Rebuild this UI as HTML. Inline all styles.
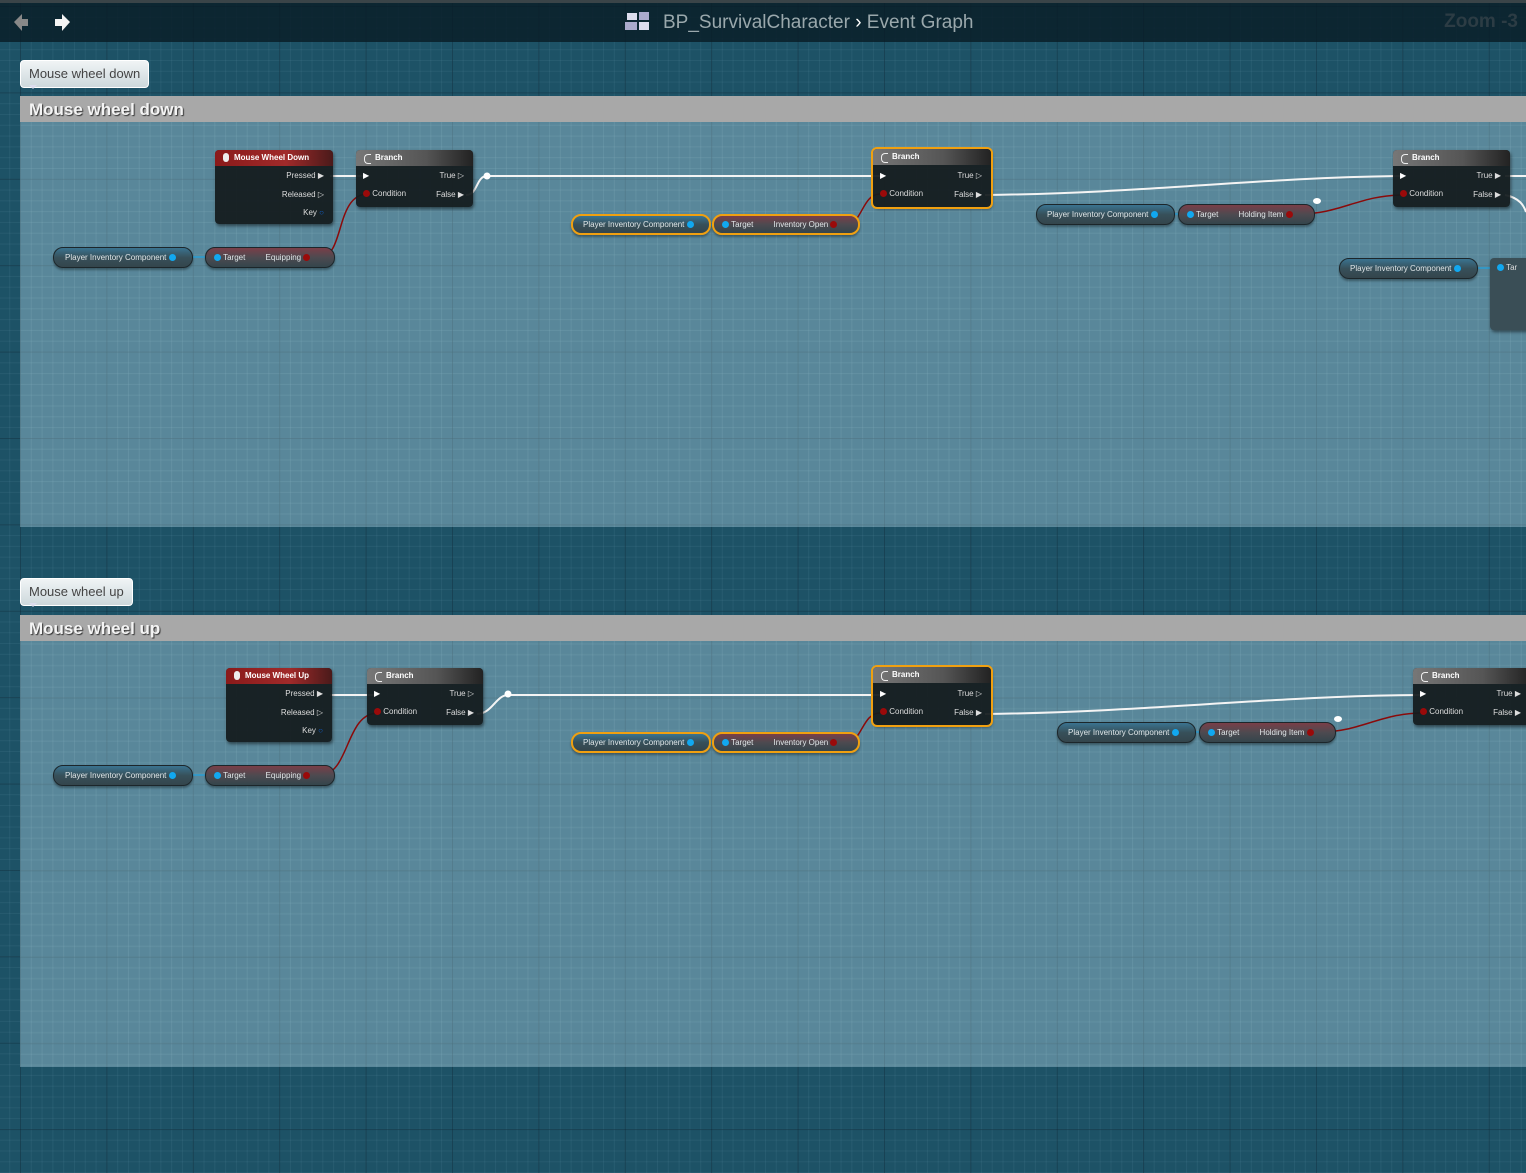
<!DOCTYPE html>
<html><head><meta charset="utf-8"><style>
*{box-sizing:border-box;margin:0;padding:0}
body{width:1526px;height:1173px;overflow:hidden;position:relative;font-family:"Liberation Sans",sans-serif;
background-color:#1d5266;
background-image:linear-gradient(90deg,rgba(10,40,55,.5) 1px,transparent 1px),linear-gradient(0deg,rgba(10,40,55,.5) 1px,transparent 1px),linear-gradient(90deg,rgba(90,140,160,.16) 1px,transparent 1px),linear-gradient(0deg,rgba(90,140,160,.16) 1px,transparent 1px);
background-size:86.4px 86.4px,86.4px 86.4px,10.8px 10.8px,10.8px 10.8px;
background-position:20px 7px,20px 7px,20px 7px,20px 7px}
.top{position:absolute;left:0;top:0;width:1526px;height:42px;background:rgba(8,28,38,.82);border-top:3px solid #3a4448}
.title{position:absolute;left:663px;top:9px;font-size:19px;color:#9aa8ac}
.zoom{position:absolute;right:8px;top:8px;font-size:19px;font-weight:bold;color:#2c3c44}
.cmt{position:absolute;left:20px;width:1506px;background-color:rgba(130,172,188,.6);
background-image:linear-gradient(90deg,rgba(60,100,115,.3) 1px,transparent 1px),linear-gradient(0deg,rgba(60,100,115,.3) 1px,transparent 1px),linear-gradient(90deg,rgba(150,190,205,.1) 1px,transparent 1px),linear-gradient(0deg,rgba(150,190,205,.1) 1px,transparent 1px);
background-size:86.4px 86.4px,86.4px 86.4px,10.8px 10.8px,10.8px 10.8px;background-position:0 -89px}
.cmt .hd{height:26px;background:#a8a8a8;color:#f4f4f4;font-size:17px;font-weight:bold;padding:4px 0 0 9px;text-shadow:1px 1px 1px #333}
.bub{position:absolute;left:20px;height:28px;background:linear-gradient(#f0f4f5,#cdd8dc);border-radius:4px;border:1px solid #fff;color:#444;font-size:13px;padding:5px 8px 0 8px}
.bub:after{content:"";position:absolute;left:8px;bottom:-6px;border:4px solid transparent;border-top:4px solid #dde;}
.node{position:absolute;background:rgba(20,28,30,.94);border-radius:4px;box-shadow:1px 2px 3px rgba(0,0,0,.5);color:#ddd;font-size:8px}
.node .h{height:16px;border-radius:4px 4px 0 0;font-weight:bold;color:#fff;padding:3px 0 0 19px;font-size:8px;position:relative}
.ev .h{background:linear-gradient(90deg,#8a1a1a,#a02a2a 60%,#4a1a1a)}
.br .h{background:linear-gradient(90deg,#777,#555 60%,#222)}
.br .h:before{content:"";position:absolute;left:8px;top:4px;width:6px;height:8px;border:1.5px solid #eee;border-right:none;border-radius:4px 0 0 4px}
.ev .h:before{content:"";position:absolute;left:8px;top:3px;width:6px;height:9px;background:#eee;border-radius:3px}
.sel{outline:2px solid #f0a010;outline-offset:0}
.r{position:absolute;right:9px;text-align:right}
.l{position:absolute}
.pill{position:absolute;height:21px;border-radius:10px;background:linear-gradient(#3e5862,#34454c);border:1px solid #1c262a;box-shadow:0 2px 2px rgba(0,0,0,.35);color:#e0e6e8;font-size:8px;line-height:19px}
.pb{background:linear-gradient(#3a7390,#37505a 50%,#34454c)}
.pr{background:linear-gradient(#7a3e48,#4d4a50 50%,#34454c)}
.ps{border:2px solid #f0a010;line-height:17px}
.dot{display:inline-block;width:7px;height:7px;border-radius:50%;vertical-align:middle}
.b{background:#11a8f0}.rd{background:#9a0a0a}
svg{position:absolute;left:0;top:0}
</style></head><body>
<div class="top">
<svg width="90" height="40" style="top:2px"><path d="M14 17 L22 9 L22 14 L28 14 L28 21 L22 21 L22 26 Z" fill="#888"/><path d="M70 17 L62 9 L62 14 L55 14 L55 21 L62 21 L62 26 Z" fill="#f4f4f4"/></svg>
<svg width="30" height="30" style="left:624px;top:6px"><rect x="3" y="4" width="10" height="7" fill="#dde"/><rect x="15" y="3" width="10" height="8" fill="#aac"/><rect x="1" y="13" width="12" height="8" fill="#aac"/><rect x="15" y="13" width="10" height="8" fill="#dde"/></svg>
<div class="title">BP_SurvivalCharacter <span style="color:#fff">›</span> Event Graph</div>
<div class="zoom">Zoom -3</div>
</div>

<div class="cmt" style="top:96px;height:431px"><div class="hd">Mouse wheel down</div></div>
<div class="bub" style="top:60px">Mouse wheel down</div>
<div class="cmt" style="top:615px;height:452px"><div class="hd">Mouse wheel up</div></div>
<div class="bub" style="top:578px">Mouse wheel up</div>

<svg width="1526" height="1173" fill="none">
<g stroke="#f4f4f4" stroke-width="2">
<path d="M330 176 H364"/><path d="M466 195 C478 195,476 176,487 176 H880"/><path d="M985 195 C1150 193,1250 178,1400 176"/><path d="M1505 176 H1526"/><path d="M1505 195 C1520 198,1524 206,1526 212"/>
<path d="M330 695 H375"/><path d="M477 714 C492 714,496 695,508 695 H880"/><path d="M985 714 C1150 712,1270 696,1420 695"/>
</g>
<circle cx="487" cy="176" r="3.5" fill="#fff"/><circle cx="508" cy="694" r="3.5" fill="#fff"/>
<ellipse cx="1317" cy="201" rx="4" ry="3" fill="#fff"/><ellipse cx="1338" cy="719" rx="4" ry="3" fill="#fff"/>
<g stroke="#8a0a0a" stroke-width="1.5">
<path d="M320 257 C345 257,335 194,368 194"/><path d="M846 225 C862 225,862 194,880 194"/><path d="M1300 214 C1340 214,1360 195,1403 195"/>
<path d="M320 775 C350 775,345 713,378 713"/><path d="M846 743 C862 743,862 713,880 713"/><path d="M1321 732 C1360 732,1380 713,1423 713"/>
</g>
<g stroke="#11a8f0" stroke-width="1"><path d="M180 257H215M696 225H723M1162 214H1188M1464 268H1502M180 775H215M696 743H723M1183 732H1209"/></g>
</svg>

<div class="node ev" style="left:215px;top:150px;width:118px;height:74px"><div class="h">Mouse Wheel Down</div>
<div class="r" style="top:21px">Pressed ▶</div><div class="r" style="top:40px">Released ▷</div><div class="r" style="top:58px">Key <span style="color:#1060d0">○</span></div></div>
<div class="node br" style="left:356px;top:150px;width:117px;height:57px"><div class="h">Branch</div>
<div class="l" style="left:7px;top:21px;color:#fff">▶</div><div class="l" style="left:7px;top:39px"><span class="dot rd"></span> Condition</div>
<div class="r" style="top:21px">True ▷</div><div class="r" style="top:40px">False ▶</div></div>
<div class="node br sel" style="left:873px;top:149px;width:118px;height:58px"><div class="h">Branch</div>
<div class="l" style="left:7px;top:22px;color:#fff">▶</div><div class="l" style="left:7px;top:40px"><span class="dot rd"></span> Condition</div>
<div class="r" style="top:22px">True ▷</div><div class="r" style="top:41px">False ▶</div></div>
<div class="node br" style="left:1393px;top:150px;width:117px;height:57px"><div class="h">Branch</div>
<div class="l" style="left:7px;top:21px;color:#fff">▶</div><div class="l" style="left:7px;top:39px"><span class="dot rd"></span> Condition</div>
<div class="r" style="top:21px">True ▶</div><div class="r" style="top:40px">False ▶</div></div>
<div class="node" style="left:1490px;top:258px;width:40px;height:72px;background:#3a4e56"><div class="l" style="left:7px;top:5px"><span class="dot b"></span> Tar</div></div>

<div class="pill pb" style="left:53px;top:247px;width:140px;padding-left:11px">Player Inventory Component <span class="dot b"></span></div>
<div class="pill pr" style="left:205px;top:247px;width:130px;padding-left:8px"><span class="dot b"></span> Target <span style="margin-left:18px">Equipping</span> <span class="dot rd"></span></div>
<div class="pill pb ps" style="left:571px;top:214px;width:140px;padding-left:10px">Player Inventory Component <span class="dot b"></span></div>
<div class="pill pr ps" style="left:712px;top:214px;width:148px;padding-left:8px"><span class="dot b"></span> Target <span style="margin-left:18px">Inventory Open</span> <span class="dot rd"></span></div>
<div class="pill pb" style="left:1036px;top:204px;width:139px;padding-left:10px">Player Inventory Component <span class="dot b"></span></div>
<div class="pill pr" style="left:1178px;top:204px;width:137px;padding-left:8px"><span class="dot b"></span> Target <span style="margin-left:18px">Holding Item</span> <span class="dot rd"></span></div>
<div class="pill pb" style="left:1339px;top:258px;width:139px;padding-left:10px">Player Inventory Component <span class="dot b"></span></div>

<div class="node ev" style="left:226px;top:668px;width:106px;height:74px"><div class="h">Mouse Wheel Up</div>
<div class="r" style="top:21px">Pressed ▶</div><div class="r" style="top:40px">Released ▷</div><div class="r" style="top:58px">Key <span style="color:#1060d0">○</span></div></div>
<div class="node br" style="left:367px;top:668px;width:116px;height:57px"><div class="h">Branch</div>
<div class="l" style="left:7px;top:21px;color:#fff">▶</div><div class="l" style="left:7px;top:39px"><span class="dot rd"></span> Condition</div>
<div class="r" style="top:21px">True ▷</div><div class="r" style="top:40px">False ▶</div></div>
<div class="node br sel" style="left:873px;top:667px;width:118px;height:58px"><div class="h">Branch</div>
<div class="l" style="left:7px;top:22px;color:#fff">▶</div><div class="l" style="left:7px;top:40px"><span class="dot rd"></span> Condition</div>
<div class="r" style="top:22px">True ▷</div><div class="r" style="top:41px">False ▶</div></div>
<div class="node br" style="left:1413px;top:668px;width:117px;height:57px"><div class="h">Branch</div>
<div class="l" style="left:7px;top:21px;color:#fff">▶</div><div class="l" style="left:7px;top:39px"><span class="dot rd"></span> Condition</div>
<div class="r" style="top:21px">True ▶</div><div class="r" style="top:40px">False ▶</div></div>

<div class="pill pb" style="left:53px;top:765px;width:140px;padding-left:11px">Player Inventory Component <span class="dot b"></span></div>
<div class="pill pr" style="left:205px;top:765px;width:130px;padding-left:8px"><span class="dot b"></span> Target <span style="margin-left:18px">Equipping</span> <span class="dot rd"></span></div>
<div class="pill pb ps" style="left:571px;top:732px;width:140px;padding-left:10px">Player Inventory Component <span class="dot b"></span></div>
<div class="pill pr ps" style="left:712px;top:732px;width:148px;padding-left:8px"><span class="dot b"></span> Target <span style="margin-left:18px">Inventory Open</span> <span class="dot rd"></span></div>
<div class="pill pb" style="left:1057px;top:722px;width:139px;padding-left:10px">Player Inventory Component <span class="dot b"></span></div>
<div class="pill pr" style="left:1199px;top:722px;width:137px;padding-left:8px"><span class="dot b"></span> Target <span style="margin-left:18px">Holding Item</span> <span class="dot rd"></span></div>
</body></html>
